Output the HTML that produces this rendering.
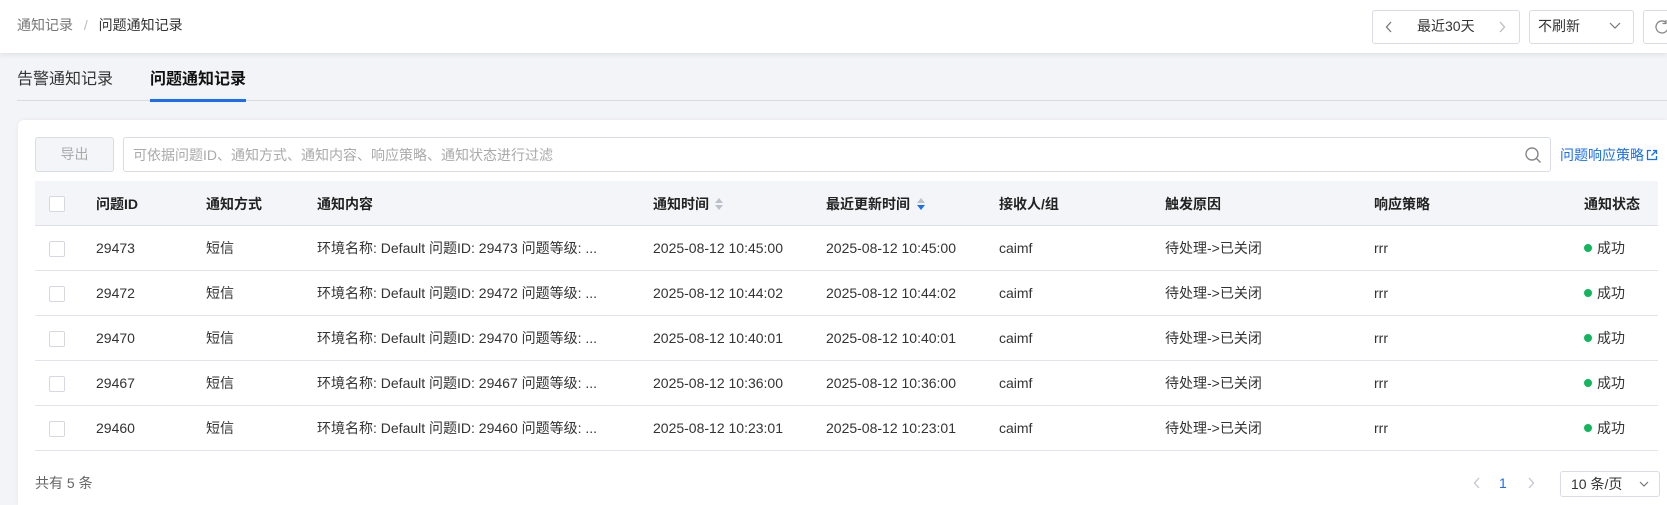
<!DOCTYPE html>
<html style="overflow:hidden;height:505px"><head><meta charset="utf-8"><style>
*{margin:0;padding:0;box-sizing:border-box}
body{width:1667px;height:505px;overflow:hidden;background:#f3f4f7;font-family:"Liberation Sans","Noto Sans CJK SC",sans-serif;font-size:14px;line-height:20px;color:#333;position:relative}
.abs{position:absolute}
.hdr{left:0;top:0;width:1667px;height:53px;background:#fff;box-shadow:0 2px 5px rgba(0,0,0,.08)}
.box{border:1px solid #d9dce3;border-radius:3px;background:#fff}
.card{left:18px;top:120px;width:1649px;height:385px;background:#fff;border-radius:6px 0 0 0;box-shadow:0 0 4px rgba(0,0,0,.06)}
.th{background:#f4f5f8;border-bottom:1px solid #dcdfe6}
.row{border-bottom:1px solid #e2e4ea}
.cb{width:16px;height:16px;border:1px solid #d5d8de;border-radius:2px;background:#fff}
.dot{display:inline-block;width:8px;height:8px;border-radius:50%;background:#12b65d;margin-right:5px;vertical-align:1px}
b{font-weight:700;color:#222}
</style></head><body>
<div class="abs hdr"></div>
<div class="abs" style="left:17px;top:15px;color:#777">通知记录 <span style="color:#bbb;margin:0 7px">/</span> <span style="color:#333">问题通知记录</span></div>
<div class="abs box" style="left:1372px;top:10px;width:148px;height:34px"></div>
<svg class="abs" style="left:1385px;top:21px" width="8" height="12"><path d="M6 1L1.5 6 6 11" fill="none" stroke="#777" stroke-width="1.3"/></svg>
<div class="abs" style="left:1417px;top:16px">最近30天</div>
<svg class="abs" style="left:1498px;top:21px" width="8" height="12"><path d="M2 1l4.5 5L2 11" fill="none" stroke="#bbb" stroke-width="1.3"/></svg>
<div class="abs box" style="left:1529px;top:10px;width:105px;height:34px"></div>
<div class="abs" style="left:1538px;top:16px">不刷新</div>
<svg class="abs" style="left:1609px;top:22px" width="12" height="8"><path d="M1 1l5 5 5-5" fill="none" stroke="#777" stroke-width="1.2"/></svg>
<div class="abs box" style="left:1643px;top:10px;width:40px;height:34px"></div>
<svg class="abs" style="left:1654px;top:19px" width="16" height="16"><path d="M14 8a6 6 0 1 1-2-4.5" fill="none" stroke="#888" stroke-width="1.3"/><path d="M12 1v3.5h-3.5" fill="none" stroke="#888" stroke-width="1.3"/></svg>

<div class="abs" style="left:17px;top:70px;font-size:16px;color:#333">告警通知记录</div>
<div class="abs" style="left:150px;top:70px;font-size:16px;color:#111;font-weight:700">问题通知记录</div>
<div class="abs" style="left:17px;top:100px;width:1650px;height:1px;background:#d8dbe1"></div>
<div class="abs" style="left:150px;top:99px;width:96px;height:3px;background:#1a6ef5"></div>

<div class="abs card"></div>
<div class="abs" style="left:35px;top:137px;width:79px;height:35px;border:1px solid #d9dce3;border-radius:3px;background:#f4f5f8;color:#aaa;text-align:center;line-height:33px">导出</div>
<div class="abs box" style="left:123px;top:137px;width:1428px;height:35px"></div>
<div class="abs" style="left:133px;top:145px;color:#aaa">可依据问题ID、通知方式、通知内容、响应策略、通知状态进行过滤</div>
<svg class="abs" style="left:1524px;top:146px" width="18" height="18"><circle cx="8" cy="8" r="6" fill="none" stroke="#888" stroke-width="1.4"/><path d="M12.5 12.5l4 4" stroke="#888" stroke-width="1.4"/></svg>
<div class="abs" style="left:1560px;top:145px;color:#1a6ef5">问题响应策略</div>
<svg class="abs" style="left:1646px;top:149px" width="12" height="12"><path d="M5 1.5H1.5v9h9V7M7 1.5h3.5V5M10.5 1.5L5.5 6.5" fill="none" stroke="#1a6ef5" stroke-width="1.3"/></svg>

<div class="abs th" style="left:35px;top:181px;width:1623px;height:45px"></div>
<div class="abs" style="left:0;top:194px;width:1667px">
<div class="abs cb" style="left:49px;top:2px"></div>
<b class="abs" style="left:96px">问题ID</b>
<b class="abs" style="left:206px">通知方式</b>
<b class="abs" style="left:317px">通知内容</b>
<b class="abs" style="left:653px">通知时间</b>
<svg class="abs" style="left:714px;top:2px" width="10" height="16"><path d="M1 7l4-5 4 5z" fill="#bcc0c8"/><path d="M1 9l4 5 4-5z" fill="#bcc0c8"/></svg>
<b class="abs" style="left:826px">最近更新时间</b>
<svg class="abs" style="left:916px;top:2px" width="10" height="16"><path d="M1 7l4-5 4 5z" fill="#bcc0c8"/><path d="M1 9l4 5 4-5z" fill="#1a6ef5"/></svg>
<b class="abs" style="left:999px">接收人/组</b>
<b class="abs" style="left:1165px">触发原因</b>
<b class="abs" style="left:1374px">响应策略</b>
<b class="abs" style="left:1584px">通知状态</b>
</div>

<div id="rows"></div>
<script>
var d=[["29473","10:45:00","10:45:00"],["29472","10:44:02","10:44:02"],["29470","10:40:01","10:40:01"],["29467","10:36:00","10:36:00"],["29460","10:23:01","10:23:01"]];
var h="";
d.forEach(function(r,i){var t=226+i*45;
h+='<div class="abs row" style="left:35px;top:'+t+'px;width:1623px;height:45px"></div>';
var y=t+12;
h+='<div class="abs cb" style="left:49px;top:'+(y+3)+'px"></div>';
h+='<div class="abs" style="left:96px;top:'+y+'px">'+r[0]+'</div>';
h+='<div class="abs" style="left:206px;top:'+y+'px">短信</div>';
h+='<div class="abs" style="left:317px;top:'+y+'px">环境名称: Default 问题ID: '+r[0]+' 问题等级: ...</div>';
h+='<div class="abs" style="left:653px;top:'+y+'px">2025-08-12 '+r[1]+'</div>';
h+='<div class="abs" style="left:826px;top:'+y+'px">2025-08-12 '+r[2]+'</div>';
h+='<div class="abs" style="left:999px;top:'+y+'px">caimf</div>';
h+='<div class="abs" style="left:1165px;top:'+y+'px">待处理-&gt;已关闭</div>';
h+='<div class="abs" style="left:1374px;top:'+y+'px">rrr</div>';
h+='<div class="abs" style="left:1584px;top:'+y+'px"><span class="dot"></span>成功</div>';
});
document.getElementById("rows").innerHTML=h;
</script>

<div class="abs" style="left:35px;top:473px;color:#666">共有 5 条</div>
<svg class="abs" style="left:1473px;top:477px" width="8" height="12"><path d="M6 1L1.5 6 6 11" fill="none" stroke="#c0c4cc" stroke-width="1.3"/></svg>
<div class="abs" style="left:1499px;top:473px;color:#1a6ef5">1</div>
<svg class="abs" style="left:1527px;top:477px" width="8" height="12"><path d="M2 1l4.5 5L2 11" fill="none" stroke="#c0c4cc" stroke-width="1.3"/></svg>
<div class="abs box" style="left:1560px;top:471px;width:100px;height:26px"></div>
<div class="abs" style="left:1571px;top:474px">10 条/页</div>
<svg class="abs" style="left:1639px;top:481px" width="10" height="7"><path d="M1 1l4 4 4-4" fill="none" stroke="#777" stroke-width="1.2"/></svg>
</body></html>
